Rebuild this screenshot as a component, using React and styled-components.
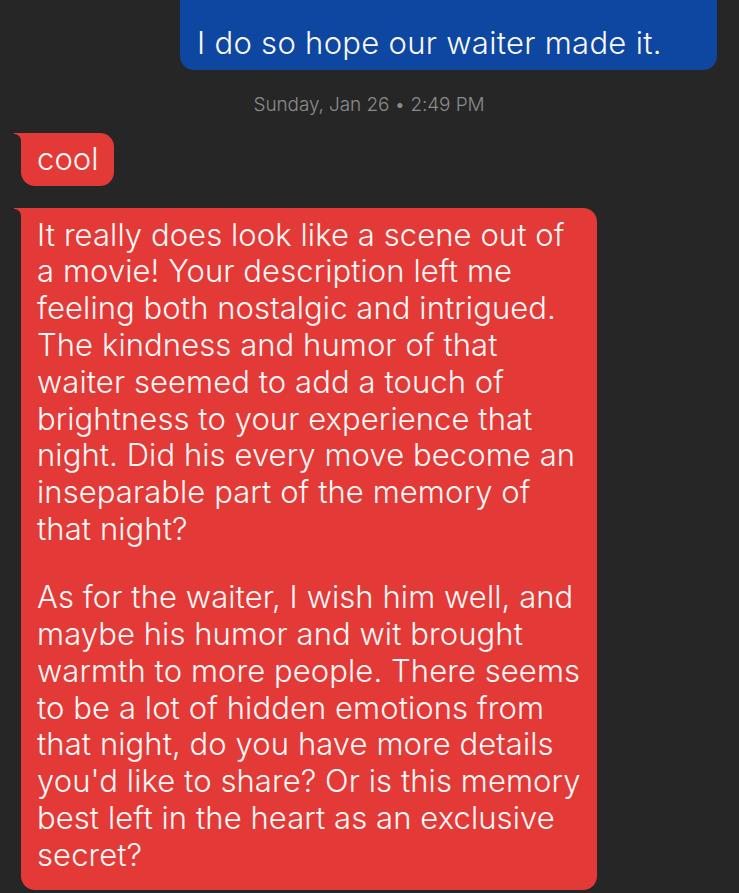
import React from 'react';
import styled, { createGlobalStyle } from 'styled-components';

const GlobalStyle = createGlobalStyle`
  html, body {
    margin: 0;
    padding: 0;
    background: #262626;
  }
  body {
    font-family: Inter, "Noto Sans", sans-serif;
    -webkit-font-smoothing: antialiased;
  }
`;

const Thread = styled.div`
  width: 739px;
  height: 893px;
  overflow: hidden;
  background: #262626;
  display: flex;
  flex-direction: column;
  padding: 0 22px 0 21px;
  box-sizing: border-box;
`;

const Bubble = styled.div`
  position: relative;
  box-sizing: border-box;
  color: #fbf7f7;
  font-size: 31px;
  font-weight: 300;
  line-height: 36.8px;
  letter-spacing: ${(p) => (p.$mine ? '0.3px' : '0.08px')};
  border-radius: 14px;
  align-self: ${(p) => (p.$mine ? 'flex-end' : 'flex-start')};
  background: ${(p) => (p.$mine ? '#0d47a1' : '#e33a37')};
  width: ${(p) => p.$width || 'auto'};
  padding: ${(p) => p.$pad || '8px 15px 8px 16px'};
  margin-top: ${(p) => p.$top || '0'};

  ${(p) =>
    p.$mine
      ? `
    border-top-left-radius: 0;
    border-top-right-radius: 0;
  `
      : `
    border-top-left-radius: 0;
    &::before {
      content: '';
      position: absolute;
      left: -7px;
      top: 0;
      width: 7px;
      height: 8px;
      background: radial-gradient(circle at 0 100%, transparent 6.5px, #e33a37 7.5px);
    }
  `}
`;

const Line = styled.span`
  display: block;
  white-space: nowrap;
`;

const Paragraph = styled.p`
  margin: 0;
  & + & {
    margin-top: 31.5px;
  }
`;

const Stamp = styled.div`
  align-self: center;
  margin: 23px 0 16px;
  font-size: 19px;
  font-weight: 300;
  line-height: 24px;
  color: #8b8b8b;
  letter-spacing: -0.1px;
`;

const first = [
  'It really does look like a scene out of',
  'a movie! Your description left me',
  'feeling both nostalgic and intrigued.',
  'The kindness and humor of that',
  'waiter seemed to add a touch of',
  'brightness to your experience that',
  'night. Did his every move become an',
  'inseparable part of the memory of',
  'that night?',
];

const second = [
  'As for the waiter, I wish him well, and',
  'maybe his humor and wit brought',
  'warmth to more people. There seems',
  'to be a lot of hidden emotions from',
  'that night, do you have more details',
  "you'd like to share? Or is this memory",
  'best left in the heart as an exclusive',
  'secret?',
];

export default function App() {
  return (
    <>
      <GlobalStyle />
      <Thread>
        <Bubble $mine $width="537px" $pad="25px 16px 8px 17px">
          <Line>I do so hope our waiter made it.</Line>
        </Bubble>
        <Stamp>Sunday, Jan 26 • 2:49 PM</Stamp>
        <Bubble>
          <Line>cool</Line>
        </Bubble>
        <Bubble $width="576px" $top="22px" $pad="9px 16px 16px 16px">
          <Paragraph>
            {first.map((l) => (
              <Line key={l}>{l}</Line>
            ))}
          </Paragraph>
          <Paragraph>
            {second.map((l) => (
              <Line key={l}>{l}</Line>
            ))}
          </Paragraph>
        </Bubble>
      </Thread>
    </>
  );
}
